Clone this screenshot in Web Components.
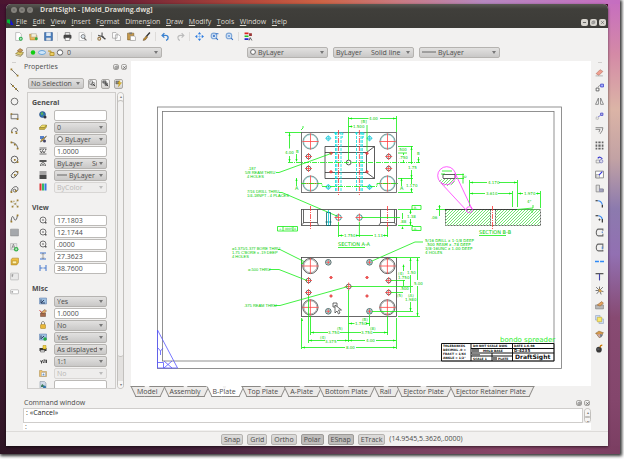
<!DOCTYPE html>
<html lang="en">
<head>
<meta charset="utf-8">
<title>DraftSight</title>
<style>
html, body { margin: 0; height: 100%; }
body { background: #e4e4e4; font: 7px/10px "Open Sans", "Noto Sans", sans-serif; color: #4c4c4c; }
</style>
</head>
<body>
<ds-desktop>
  <ds-window>
    <ds-titlebar slot="title">DraftSight - [Mold_Drawing.dwg]</ds-titlebar>
    <ds-menubar slot="menu" items="_File,_Edit,_View,_Insert,F_ormat,Dimen_sion,_Draw,_Modify,_Tools,_Window,_Help"></ds-menubar>
    <ds-toolbar slot="tools" icons="new,open,save,|,print,preview,|,cut,copy,paste,brush,|,undo,redo,|,pan,zoomin,zoomout,|,props"></ds-toolbar>
    <ds-layerbar slot="tools"></ds-layerbar>
    <ds-palette slot="left" icons="line,ray,circle,rect,arc3,arc,ring,ellipse,earc,points,spline,hatch,textadd,block,note,field"></ds-palette>
    <ds-properties slot="side"></ds-properties>
    <ds-drawing slot="canvas"></ds-drawing>
    <ds-tabs slot="canvas" items="Model,Assembly,B-Plate,Top Plate,A-Plate,Bottom Plate,Rail,Ejector Plate,Ejector Retainer Plate" current="B-Plate"></ds-tabs>
    <ds-command slot="command">: «Cancel»</ds-command>
    <ds-palette slot="right" icons="erase,copyobj,mirror,move,offset,grid,rotate,scale,stretch,fillet,chamfer,slot1,slot2,split,trim,explode,edit,order,render,bomb"></ds-palette>
    <ds-status slot="status">(14.9545,5.3626,.0000)</ds-status>
  </ds-window>
</ds-desktop>

<script>
const ICONS = {
  new: '<path d="M3 1h7l3 3v11H3z" fill="#fff" stroke="#999"/><circle cx="12" cy="12" r="3.5" fill="#2a4"/><path d="M12 10v4M10 12h4" stroke="#fff"/>',
  open: '<path d="M1 4h5l1 2h7v8H2z" fill="#e9b95a" stroke="#a97a2a"/><path d="M4 3h9v6H4z" fill="#f4f0d8" stroke="#aa9"/><circle cx="13" cy="12" r="2.5" fill="#3a4"/>',
  save: '<path d="M1 1h14v14H1z" fill="#4a7dbb" stroke="#2d568c"/><path d="M4 1h8v6H4z" fill="#dfeaf5"/><path d="M4 10h8v5H4z" fill="#ddd"/>',
  print: '<path d="M4 1h8v5H4z" fill="#eee" stroke="#555"/><rect x="1" y="5" width="14" height="7" rx="2" fill="#444"/><path d="M4 10h8v5H4z" fill="#fff" stroke="#555"/>',
  preview: '<path d="M2 1h8l2 3v11H2z" fill="#fff" stroke="#aaa"/><circle cx="9" cy="8" r="3.5" fill="#dde6ee" stroke="#777" stroke-width="1.5"/><path d="M11 11l4 4" stroke="#666" stroke-width="2"/>',
  cut: '<path d="M9 1v8M2 6l10 3" stroke="#555" stroke-width="2"/><circle cx="4" cy="12" r="2.5" fill="none" stroke="#9a7a4a" stroke-width="2"/><path d="M9 8l6 5" stroke="#444" stroke-width="2.5"/>',
  copy: '<path d="M1 1h6l2 2v8H1zM6 5h6l3 3v7H6z" fill="#fff" stroke="#888"/>',
  paste: '<path d="M1 2h11v12H1z" fill="#c79a4a" stroke="#7a5a20"/><path d="M4 1h5v3H4z" fill="#777"/><path d="M6 7h7l2 2v6H6z" fill="#fff" stroke="#888"/>',
  brush: '<path d="M14 1L7 9" stroke="#333" stroke-width="2.5"/><path d="M8 7l2 2-4 5-4 1 1-3z" fill="#c08a2a" stroke="#654"/>',
  undo: '<path d="M6 2L2 6l4 4M2 6h6c6 0 6 7 1 9" fill="none" stroke="#3b82d0" stroke-width="2.4"/>',
  redo: '<path d="M10 2l4 4-4 4M14 6H8c-6 0-6 7-1 9" fill="none" stroke="#bbb" stroke-width="2"/>',
  pan: '<path d="M8 0l3 4H5zM8 16l3-4H5zM0 8l4-3v6zM16 8l-4-3v6z" fill="#2f7de0"/><path d="M8 4v8M4 8h8" stroke="#7ab0f0"/>',
  zoomin: '<circle cx="7" cy="7" r="5" fill="#d7e6f7" stroke="#7ea6d6" stroke-width="2"/><path d="M11 11l3 3M5 7h4M7 5v4M10 3h5" stroke="#2f6fc8" stroke-width="2"/>',
  zoomout: '<circle cx="7" cy="7" r="5" fill="#d7e6f7" stroke="#7ea6d6" stroke-width="2"/><path d="M11 11l3 3M5 7h4" stroke="#2f6fc8" stroke-width="2"/>',
  props: '<path d="M1 1h7v3H1z" fill="#d22"/><path d="M1 6h7v3H1z" fill="#2b2"/><path d="M1 11h7v3H1z" fill="#22c"/><path d="M9 2h5v5H9z" fill="#933"/><path d="M9 15l2-5 3 5" stroke="#444" fill="none" stroke-width="1.5"/>',
  layers: '<path d="M1 10l6-4 8 2-5 5z" fill="#e2cf6a" stroke="#75641c"/><path d="M4 5l5-4 5 3-5 4z" fill="#c99a58" stroke="#7c5a2a"/><path d="M1 13l9 2 5-5" stroke="#75641c" fill="none"/>',
  line: '<path d="M2 2l12 12" stroke="#555" stroke-width="1.4"/><path d="M1 1h3v3H1zM12 12h3v3h-3z" fill="#9a7a2a"/>',
  ray: '<path d="M1 1l14 14" stroke="#444" stroke-width="1.6"/><path d="M4 4h3v3H4zM9 9h3v3H9z" fill="#9a7a2a"/>',
  circle: '<circle cx="8" cy="8" r="6" fill="none" stroke="#666" stroke-width="1.6"/>',
  rect: '<path d="M2 4h12v8H2z" fill="none" stroke="#666" stroke-width="1.6"/><path d="M1 2h3v3H1zM12 11h3v3h-3z" fill="#9a7a2a"/>',
  arc3: '<path d="M3 11C2 2 14 1 13 8c-1 3-3 3-4 1" fill="none" stroke="#555" stroke-width="1.6"/><path d="M2 10h3v3H2zM10 11h3v3h-3z" fill="#9a7a2a"/>',
  arc: '<path d="M2 3c7-1 11 4 12 11" fill="none" stroke="#555" stroke-width="1.6"/><path d="M1 1h3v3H1zM7 5h3v3H7zM12 12h3v3h-3z" fill="#9a7a2a"/>',
  ring: '<circle cx="8" cy="8" r="6" fill="none" stroke="#555" stroke-width="1.6"/><path d="M7 7h3v3H7zM12 11h3v3h-3z" fill="#9a7a2a"/>',
  ellipse: '<ellipse cx="8" cy="8" rx="7" ry="4" transform="rotate(-45 8 8)" fill="none" stroke="#555" stroke-width="1.6"/><path d="M7 7h3v3H7zM12 2h3v3h-3z" fill="#9a7a2a"/>',
  earc: '<path d="M2 12C3 3 13 0 14 6s-6 8-8 5 2-5 5-2" fill="none" stroke="#555" stroke-width="1.6"/><path d="M1 11h3v3H1zM9 9h3v3H9z" fill="#9a7a2a"/>',
  points: '<path d="M1 3h3v3H1zM8 7h3v3H8zM12 1h3v3h-3zM3 12h3v3H3zM12 12h3v3h-3zM6 3h2v2H6z" fill="#9a7a2a"/><path d="M3 5l6 4 4-6M5 13l4-4 4 4" stroke="#bba" fill="none"/>',
  spline: '<path d="M2 13C3 1 6 4 7 8s5 5 6-5" fill="none" stroke="#555" stroke-width="1.6"/><path d="M1 12h3v3H1zM12 1h3v3h-3z" fill="#9a7a2a"/>',
  hatch: '<path d="M1 2h14v12H1z" fill="#a5a8ac" stroke="#888"/>',
  textadd: '<path d="M1 1h11v11H1z" fill="#e8e8e8" stroke="#aaa"/><path d="M3 10l3-8 3 8M4 7h4" stroke="#666" fill="none"/><circle cx="11" cy="11" r="4" fill="#36b04a"/><path d="M11 9v4M9 11h4" stroke="#fff"/>',
  block: '<path d="M4 2h11v8l-3 4H2V5z" fill="#f0c040" stroke="#a57c1a"/><path d="M4 7h8v5H4z" fill="#fff3b0" stroke="#a57c1a"/>',
  note: '<rect x="1" y="2" width="14" height="12" rx="1" fill="#e9e9e9" stroke="#aaa"/><path d="M3 5h3M4 5v4" stroke="#555"/>',
  field: '<rect x="1" y="5" width="14" height="7" rx="1" fill="#fff" stroke="#999"/><path d="M3 7l3 2-3 1z" fill="#555"/>',
  erase: '<path d="M2 10l7-7 5 3-7 7z" fill="#f0a090" stroke="#b06a5a"/><path d="M1 14h13" stroke="#888"/>',
  copyobj: '<path d="M2 9h5v5H2z" fill="#fff" stroke="#555" stroke-width="1.5"/><path d="M10 2h5v5h-5z" fill="#aab8ff" stroke="#44c" stroke-width="1.5"/><path d="M5 7l4-3" stroke="#555"/>',
  mirror: '<path d="M6 2v11H1zM10 2v11h5z" fill="#fff" stroke="#666" stroke-width="1.3"/>',
  move: '<path d="M2 9h4v4H2z" fill="none" stroke="#888" stroke-dasharray="2 1"/><path d="M10 2h4v4h-4z" fill="#ccd" stroke="#44c" stroke-width="1.5"/><path d="M6 9l3-3" stroke="#44c" stroke-width="1.5"/>',
  offset: '<path d="M1 3h13l-1 5-4 6M1 6h8l-2 5" fill="none" stroke="#777" stroke-width="1.5"/>',
  grid: '<path d="M1 1h3v3H1zM6 1h4v3H6zM12 1h3v3h-3zM1 6h3v4H1zM6 6h4v4H6zM12 6h3v4h-3zM1 12h3v3H1zM6 12h4v3H6zM12 12h3v3h-3z" fill="#666"/>',
  rotate: '<path d="M2 9h6v5H2z" fill="#eee" stroke="#777"/><path d="M5 6c2-4 6-2 8 1" fill="none" stroke="#33c" stroke-width="2"/><circle cx="11" cy="11" r="3" fill="#dde" stroke="#55a"/>',
  scale: '<path d="M1 2h14v12H1z" fill="#fff" stroke="#777" stroke-width="1.4"/><path d="M2 8h6v6H2z" fill="#ddd" stroke="#888"/><path d="M7 9l6-6" stroke="#33d" stroke-width="2"/>',
  stretch: '<path d="M2 2v12h13V9H8V2z" fill="#ddd" stroke="#888" stroke-width="1.4"/><path d="M8 9h6v4H8z" fill="#aab" stroke="#77a"/>',
  fillet: '<path d="M1 3h4" stroke="#222" stroke-width="2"/><path d="M5 3c5 0 7 3 8 7" fill="none" stroke="#3a8af0" stroke-width="2"/><path d="M13 10v5" stroke="#222" stroke-width="2"/>',
  chamfer: '<path d="M1 3h5M13 9v6" stroke="#222" stroke-width="2"/><path d="M6 3c4 0 6 3 7 6" fill="none" stroke="#3a8af0" stroke-width="2"/><path d="M8 8v4M6 10h4" stroke="#222"/>',
  slot1: '<path d="M14 10v4H6C1 14 1 2 6 2h8v3" fill="none" stroke="#666" stroke-width="1.8"/><path d="M13 6v3" stroke="#5a8ad0" stroke-width="2"/>',
  slot2: '<path d="M14 12v2H6C1 14 1 2 6 2h8v8" fill="none" stroke="#666" stroke-width="1.8"/><path d="M13 6v5" stroke="#5a8ad0" stroke-width="2"/>',
  split: '<path d="M0 8h7M9 8h7" stroke="#2f8af5" stroke-width="3"/>',
  trim: '<path d="M1 3h14" stroke="#444" stroke-width="2"/><path d="M8 3v12" stroke="#44a" stroke-width="2"/>',
  explode: '<path d="M8 8L2 2M8 8l6-6M8 8l7 2M8 8l3 7M8 8l-5 6M8 8L1 8M8 8V1" stroke="#555" stroke-width="1.4"/><path d="M6 5l5 2 1 4-5-1z" fill="#d8a04a"/>',
  edit: '<path d="M1 7h14v7H1z" fill="#b8b8b8" stroke="#777"/><path d="M4 7l8-6 3 3-6 5z" fill="#e3a35e" stroke="#96602d"/>',
  order: '<path d="M1 1h8v8H1z" fill="#cfe0fa" stroke="#89b"/><path d="M7 7h8v8H7z" fill="#cfe0fa" stroke="#89b"/><path d="M4 4h8v8H4z" fill="#fae96a" stroke="#b8a030"/>',
  render: '<path d="M1 6l6-4 8 3-6 5z" fill="#d79a4a" stroke="#85602a"/><path d="M3 8l5 6 6-7" fill="#caa" stroke="#85602a"/><path d="M9 7l5 2-4 5z" fill="#678"/>',
  bomb: '<circle cx="7" cy="10" r="5" fill="#3a3a3a"/><path d="M9 6c0-3 2-4 4-4" fill="none" stroke="#c70" stroke-width="2"/><path d="M4 9h4" stroke="#999"/>',
  globe: '<circle cx="7" cy="7" r="6" fill="#2e6fb5" stroke="#1d3f6c"/><path d="M3 4l4-2 2 4-4 3zM8 9l4 0-2 3z" fill="#58b058"/><circle cx="12" cy="12" r="3" fill="#334"/>',
  layer: '<path d="M1 9l5-5h9l-4 5z" fill="#f0e070" stroke="#8a7a20"/><path d="M1 9v4h10l4-5V4l-4 5z" fill="#c8b040" stroke="#8a7a20"/>',
  palette: '<path d="M2 2h8v6H2z" fill="#5580c8"/><path d="M15 2L8 11l-5 3 2-5z" fill="#e6b040" stroke="#443"/><circle cx="11" cy="12" r="3" fill="#446"/>',
  lscale: '<path d="M1 2h14M1 5h4m2 0h3m2 0h3M1 14h14" stroke="#444" stroke-width="1.5"/><path d="M2 7l3 5 2-5 3 5 3-5" stroke="#444" fill="none" stroke-width="1.6"/>',
  lstyle: '<path d="M1 2h14v4H1z" fill="#555"/><path d="M3 14c0-9 10-9 10 0M6 14c0-5 4-5 4 0" fill="none" stroke="#444" stroke-width="1.6"/>',
  weight: '<path d="M1 2h14M1 6h14" stroke="#333" stroke-width="1.6"/><path d="M1 10h14M1 14h14" stroke="#111" stroke-width="3"/>',
  colors: '<path d="M1 1h4v14H1z" fill="#d33"/><path d="M6 1h4v14H6z" fill="#3b6"/><path d="M11 1h4v14h-4z" fill="#37d"/>',
  center: '<circle cx="8" cy="8" r="6" fill="none" stroke="#555" stroke-width="1.6"/><circle cx="8" cy="8" r="1.5" fill="#444"/><path d="M12 12h3v3h-3z" fill="#555"/>',
  vsize: '<path d="M2 2h12M2 14h12" stroke="#2a66c8" stroke-width="1.8"/><path d="M8 3v10M6 5l2-2 2 2M6 11l2 2 2-2" stroke="#555" fill="none"/>',
  hsize: '<path d="M2 2v12M14 2v12" stroke="#2a66c8" stroke-width="1.8"/><path d="M3 8h10M5 6L3 8l2 2M11 6l2 2-2 2" stroke="#2a66c8" fill="none"/>',
  ucs: '<path d="M1 2h14v12H1z" fill="#9fc0e0" stroke="#57a"/><path d="M4 12V5m0 7h8M5 11l5-5" stroke="#124" stroke-width="1.6"/>',
  ucsadd: '<path d="M1 2h14v12H1z" fill="#9fc0e0" stroke="#57a"/><path d="M4 12V5M5 11l5-5" stroke="#124" stroke-width="1.6"/><circle cx="12" cy="12" r="3.5" fill="#2a4"/>',
  anno: '<path d="M3 8h10v7H3z" fill="#a66a4a" stroke="#643"/><path d="M4 7l8-6 3 3-5 5z" fill="#e8b06a" stroke="#643"/><path d="M1 3l4 3" stroke="#c33" stroke-width="2"/>',
  lock: '<path d="M5 7V4c0-4 6-4 6 0v3" fill="none" stroke="#888" stroke-width="2"/><rect x="3" y="7" width="10" height="8" rx="1" fill="#e8b83a" stroke="#a17a1a"/>',
  printer: '<path d="M1 6h14v6H1z" fill="#333"/><path d="M8 1h6v7H8z" fill="#f2d34a" stroke="#a80"/><path d="M3 10h8v4H3z" fill="#ddd" stroke="#444"/>',
  ratio: '<path d="M2 8h3v5M7 6l2 6M9 6h3v6M13 6h2v6" stroke="#444" fill="none" stroke-width="2"/>',
  folder: '<path d="M1 3h5l1 2h8v10H1z" fill="#eec26a" stroke="#a98a4a"/><path d="M5 7h8v7H5z" fill="#fff" stroke="#99a"/><circle cx="9" cy="11" r="2" fill="#69c"/>',
  sheet: '<path d="M2 1h9l3 3v11H2z" fill="#cfd8e6" stroke="#789"/><path d="M4 9l3-3 5 6H4z" fill="#3a7a5a"/><circle cx="11" cy="12" r="3" fill="#37a"/>',
  pick1: '<path d="M2 2h6v8H2zM6 6h6v6H6z" fill="#fff" stroke="#555" stroke-width="1.4"/><path d="M9 9l5 5" stroke="#333" stroke-width="2"/>',
  pick2: '<path d="M2 2h7v5H2zM7 7h5v5H7z" fill="#999" stroke="#444" stroke-width="1.6"/><path d="M10 10l4 4" stroke="#333" stroke-width="2"/>',
  pick3: '<path d="M2 2h7v7H2z" fill="#888" stroke="#444"/><path d="M11 1L6 8h4l-2 7 7-9h-4z" fill="#f3c22a" stroke="#a80"/>',
  float: '<path d="M3 6h6v6H3zM6 6V3h6v7H9" fill="none" stroke="#666" stroke-width="1.6"/>',
  close: '<path d="M4 4l8 8M12 4l-8 8" stroke="#666" stroke-width="2.4"/>',
  min: '<path d="M3 8h10" stroke="#444" stroke-width="2.4"/>'
};

const svg = (name, size = 9) =>
  `<svg width="${size}" height="${size}" viewBox="0 0 16 16" aria-hidden="true">${ICONS[name] || ''}</svg>`;

function define(name, css, html) {
  customElements.define(name, class extends HTMLElement {
    connectedCallback() {
      if (this.shadowRoot) return;
      const t = document.createElement('template');
      t.innerHTML = `<style>*{box-sizing:border-box}svg{display:block;flex:none}button,input,select{font:inherit;color:inherit;margin:0}${css}</style>` +
        (typeof html === 'function' ? html(this) : html);
      this.attachShadow({ mode: 'open' }).append(t.content.cloneNode(true));
    }
  });
}

define('ds-icon', ':host{display:block}', el => svg(el.getAttribute('name'), el.getAttribute('size') || 9));

define('ds-tool', `
  :host{display:block}
  button{display:grid;place-items:center;width:100%;height:100%;padding:0;border:0;background:none}
  :host([framed]) button{border:1px solid #a9a7a4;border-radius:2px;background:linear-gradient(#fafafa,#d3d1ce)}`,
  el => `<button type="button" aria-label="${el.getAttribute('icon')}">${svg(el.getAttribute('icon'), el.getAttribute('size') || 9)}</button>`);

define('ds-desktop', `
  :host{display:block;height:100vh;box-sizing:border-box;padding:0 4px 5px 0;background:#fff}
  div{height:100%;box-sizing:border-box;padding:4px 12px 8px 6px;box-shadow:1px 1px 3px 1px #333;
    background:
    linear-gradient(90deg,#4a1530 0,#6d2236 20%,#b84c3c 42%,#cd6446 52%,#c97a80 64%,#b688c0 78%,#c66dc0 100%) 0 0/100% 4px no-repeat,
    linear-gradient(90deg,#2e1524 0,#43203a 30%,#74405e 62%,#8a4668 82%,#7b3e62 100%) 0 100%/100% 8px no-repeat,
    linear-gradient(#c66dc0 0,#d48aa6 12%,#dbb4a6 24%,#c2a2a4 35%,#8c7aae 46%,#9270b2 56%,#874a72 70%,#84466c 88%,#7b3e62 100%) 100% 0/12px 100% no-repeat,
    linear-gradient(#461331,#54203e 50%,#2e1524);}`,
  '<div><slot></slot></div>');

define('ds-window', `
  :host{display:flex;flex-direction:column;height:100%;background:#f2f1f0;border-radius:5px 5px 0 0;overflow:hidden;box-shadow:0 1px 3px #0009}
  .head{background:linear-gradient(#5a5954 0,#403f3b 5px,#3c3b37)}
  .body{flex:1;display:flex;min-height:0}
  .mid{flex:1;display:flex;flex-direction:column;min-width:0}
  .work{flex:1;display:flex;gap:3px;min-height:0}
  .view{flex:1;display:flex;flex-direction:column;min-width:0}
  .tools{padding-bottom:1px}`,
  `<header class="head"><slot name="title"></slot><slot name="menu"></slot></header>
   <div class="tools"><slot name="tools"></slot></div>
   <div class="body"><slot name="left"></slot>
     <div class="mid"><div class="work"><slot name="side"></slot><main class="view"><slot name="canvas"></slot></main></div>
     <slot name="command"></slot></div>
   <slot name="right"></slot></div><slot name="status"></slot>`);

define('ds-titlebar', `
  :host{display:flex;align-items:center;gap:2px;height:12px;padding:0 5px;color:#dfdbd2;font-weight:bold}
  button{display:grid;place-items:center;width:6px;height:6px;padding:0;border:0;border-radius:3px;background:#85837d}
  button:first-child{background:#f0572a}
  span{margin-left:5px}`,
  `<button aria-label="Close">${svg('close', 4)}</button><button aria-label="Minimize">${svg('min', 4)}</button><button aria-label="Maximize">${svg('float', 4)}</button><span><slot></slot></span>`);

define('ds-menubar', `
  :host{display:flex;align-items:center;height:12px;color:#dfdbd2;padding:0 2px 0 1px}
  nav{display:flex;justify-content:space-between;margin-left:2px;width:271px}
  button{border:0;background:none;padding:0;line-height:10px}
  .win{display:flex;gap:2px;margin-left:auto}
  .win button{display:grid;place-items:center;width:7px;height:7px;border-radius:2px;background:#d8d5cf}`,
  el => `<svg width="7" height="8" viewBox="0 0 14 16" aria-hidden="true"><path d="M0 3h6v9l-6-3z" fill="#0b3"/><path d="M7 2l6 12H7z" fill="#11d"/></svg>
  <nav>${el.getAttribute('items').split(',').map(i => `<button type="button">${i.replace(/_(.)/, '<u>$1</u>')}</button>`).join('')}</nav>
  <div class="win"><button aria-label="Minimize">${svg('min', 5)}</button><button aria-label="Restore">${svg('float', 5)}</button><button aria-label="Close">${svg('close', 5)}</button></div>`);

define('ds-toolbar', `
  :host{display:flex;align-items:center;height:16px;padding-left:5px}
  ds-tool{width:15px;height:13px}
  i{width:1px;height:9px;background:#dedcda;margin:0 2px 0 1px}`,
  el => el.getAttribute('icons').split(',').map(n => n === '|' ? '<i></i>' : `<ds-tool icon="${n}"></ds-tool>`).join(''));

define('ds-select', `
  :host{display:block;height:11px;min-width:0;color:#4c4c4c}
  label{display:flex;align-items:center;gap:2px;height:100%;padding:0 3px 0 2px;border:1px solid #b5b3b0;border-radius:2px;background:linear-gradient(#e2e1e0,#c9c8c7)}
  select{appearance:none;flex:1;width:0;min-width:0;padding:0;border:0;background:none;line-height:9px;height:9px;opacity:1;text-overflow:clip}
  :host([disabled]){color:#b9b7b5}
  :host([disabled]) label{background:#eeedec;border-color:#d8d6d4}`,
  el => `<label><slot></slot><select aria-label="${el.getAttribute('label')}" ${el.hasAttribute('disabled') ? 'disabled' : ''}><option>${el.getAttribute('value').replace(/ {2,}/g, s => '&nbsp;'.repeat(s.length))}</option></select>
  <svg width="4" height="3" viewBox="0 0 4 3" aria-hidden="true"><path d="M0 0h4L2 3z" fill="${el.hasAttribute('disabled') ? '#bbb' : '#777'}"/></svg></label>`);

define('ds-layerbar', `
  :host{display:flex;align-items:center;height:16px;gap:5px;padding-left:9px}
  .a{width:136px}.b{width:81px}
  .m{display:flex;align-items:center;gap:2px;margin-right:80px}`,
  `<div class="m"><ds-icon name="layers"></ds-icon>
   <ds-select class="a" label="Layer" value="0"><svg width="36" height="7" viewBox="0 0 36 7" aria-hidden="true"><circle cx="4" cy="3.500" r="2.200" fill="#1c1"/><ellipse cx="13" cy="3.500" rx="3.500" ry="2" fill="#cfe6fa" stroke="#6aa5d8"/><path d="M19 2h3v2M21 3.500h4v3h-4z" stroke="#b8963a" fill="#ecd060"/><circle cx="31" cy="3.500" r="2.700" fill="#fff" stroke="#666"/></svg></ds-select></div>
   <ds-select class="b" label="Color" value="ByLayer"><svg width="6" height="6" viewBox="0 0 6 6" aria-hidden="true"><circle cx="3" cy="3" r="2.400" fill="#fff" stroke="#666"/></svg></ds-select>
   <ds-select class="b" label="Line style" value="ByLayer     Solid line"></ds-select>
   <ds-select class="b" label="Line weight" value="ByLayer"><svg width="14" height="2" aria-hidden="true"><path d="M0 1h14" stroke="#666"/></svg></ds-select>`);

define('ds-palette', `
  :host{display:block;flex:none}
  :host([slot=left]){width:16px}
  :host([slot=right]){width:17px}
  div{display:flex;flex-direction:column;justify-content:space-between;padding-top:4px}
  div::before{content:"";width:4px;height:1px;margin:-3px auto 1px;background:#d2d0ce}
  ds-tool{height:12px}`,
  el => { const n = el.getAttribute('icons').split(','); return `<div style="height:${Math.round(n.length * 14.56 + 3)}px">${n.map(i => `<ds-tool icon="${i}"></ds-tool>`).join('')}</div>`; });

define('ds-header', `
  :host{display:flex;align-items:center;height:11px;padding:0 1px 0 2px;gap:2px}
  span{flex:1}
  ds-tool{width:6px;height:6px}`,
  '<span><slot></slot></span><ds-tool icon="float" size="5" framed></ds-tool><ds-tool icon="close" size="5" framed></ds-tool>');

define('ds-row', `
  :host{display:grid;grid-template-columns:22px minmax(0,1fr);align-items:center;height:12px}
  ds-icon{justify-self:center}
  input{width:100%;height:11px;padding:0 2px;border:1px solid #bcbab7;border-radius:2px;background:#fff;line-height:9px;display:block}`,
  el => {
    const a = n => el.getAttribute(n), glyph = a('mark') === 'o' ? '<svg width="6" height="6" viewBox="0 0 6 6" aria-hidden="true"><circle cx="3" cy="3" r="2.400" fill="#fff" stroke="#666"/></svg>'
      : a('mark') === '-' ? '<svg width="10" height="2" aria-hidden="true"><path d="M0 1h10" stroke="#666"/></svg>' : '';
    return `<ds-icon name="${a('icon')}" size="8"></ds-icon>` + (a('select') !== null
      ? `<ds-select label="${a('icon')}" value="${a('select')}" ${el.hasAttribute('disabled') ? 'disabled' : ''}>${glyph}</ds-select>`
      : `<input type="text" aria-label="${a('icon')}" value="${a('value')}">`);
  });

define('ds-group', ':host{display:block;margin-bottom:8px}h2{margin:0;font:inherit;font-weight:bold;line-height:13px;height:13px}div{padding-right:8px}',
  el => `<h2>${el.getAttribute('name')}</h2><div><slot></slot></div>`);

define('ds-scrollbar', `
  :host{display:flex;flex-direction:column;width:7px;border:1px solid #c2c0bd;border-radius:4px;background:#e3e1df;overflow:hidden}
  button{height:7px;flex:none;padding:0;border:0;background:#f6f5f4;font-size:4px;line-height:5px;color:#777}
  i{flex:var(--thumb,1);background:#f2f1f0;border:solid #c2c0bd;border-width:1px 0;border-radius:3px}
  b{flex:var(--rest,0)}`,
  '<button aria-label="Up">▴</button><i></i><b></b><button aria-label="Down">▾</button>');

define('ds-properties', `
  :host{display:flex;flex-direction:column;width:106px;flex:none;box-sizing:border-box;padding-bottom:7px}
  .pick{display:flex;align-items:center;gap:4px;padding:6px 5px 3px 6px}
  .pick ds-select{flex:1}
  .pick ds-tool{width:9px;height:10px}
  .list{flex:1;display:flex;gap:1px;min-height:0;padding:0 4px 0 5px}
  .frame{flex:1;border:1px solid #cfcdcb;overflow:hidden;padding:3px 0 0 4px;min-width:0}
  ds-scrollbar{--thumb:130;--rest:12}`,
  `<ds-header>Properties</ds-header>
  <div class="pick"><ds-select label="Selection" value="No Selection"></ds-select><ds-tool icon="pick1" size="7" framed></ds-tool><ds-tool icon="pick2" size="7" framed></ds-tool><ds-tool icon="pick3" size="7" framed></ds-tool></div>
  <div class="list"><div class="frame">
   <ds-group name="General">
    <ds-row icon="globe" value=""></ds-row><ds-row icon="layer" select="0"></ds-row><ds-row icon="palette" select="ByLayer" mark="o"></ds-row>
    <ds-row icon="lscale" value="1.0000"></ds-row><ds-row icon="lstyle" select="ByLayer     Solid line"></ds-row><ds-row icon="weight" select="ByLayer" mark="-"></ds-row><ds-row icon="colors" select="ByColor" disabled></ds-row>
   </ds-group>
   <ds-group name="View">
    <ds-row icon="center" value="17.1803"></ds-row><ds-row icon="center" value="12.1744"></ds-row><ds-row icon="center" value=".0000"></ds-row><ds-row icon="vsize" value="27.3623"></ds-row><ds-row icon="hsize" value="38.7600"></ds-row>
   </ds-group>
   <ds-group name="Misc">
    <ds-row icon="ucs" select="Yes"></ds-row><ds-row icon="anno" value="1.0000"></ds-row><ds-row icon="lock" select="No"></ds-row><ds-row icon="ucsadd" select="Yes"></ds-row><ds-row icon="printer" select="As displayed"></ds-row><ds-row icon="ratio" select="1:1"></ds-row><ds-row icon="folder" select="No" disabled></ds-row><ds-row icon="sheet" value=""></ds-row>
   </ds-group></div>
  <ds-scrollbar></ds-scrollbar></div>`);

define('ds-tabs', `
  :host{display:flex;height:10px;flex:none;color:#4c4c4c}
  button{position:relative;border:0;background:none;padding:0 6px;line-height:9px;z-index:0;white-space:nowrap}
  button::before,button::after{content:"";position:absolute;z-index:-1;top:0;height:9px;border:1px solid #8b8986;background:#eceae8}
  button::before{left:2px;right:50%;border-right:0;transform:skewX(25deg)}
  button::after{left:50%;right:0;border-left:0;transform:skewX(-25deg)}
  button[aria-selected=true]::before,button[aria-selected=true]::after{background:#fff;border-top-color:#fff}`,
  el => el.getAttribute('items').split(',').map(t => `<button type="button" role="tab" aria-selected="${t === el.getAttribute('current')}">${t}</button>`).join(''));

define('ds-command', `
  :host{display:block;flex:none;padding-top:1px}
  .log{display:flex;gap:1px;height:15px}
  .log p{flex:1;margin:0 0 0 1px;padding:0 2px;background:#fff;border:1px solid #cfcdcb;line-height:7px;color:#222}
  .in{display:flex;background:#fff;margin:0 0 1px 1px;padding:0 2px;line-height:7px;height:7px}
  input{flex:1;border:0;padding:0;height:7px;line-height:7px;min-width:0;background:none}`,
  '<ds-header>Command window</ds-header><div class="log"><p><slot></slot></p><ds-scrollbar></ds-scrollbar></div><label class="in">:<input type="text" aria-label="Command"></label>');

define('ds-status', `
  :host{display:flex;align-items:center;gap:4px;height:15px;flex:none;box-sizing:border-box;padding-left:215px;border-top:1px solid #dddbd9}
  button{height:11px;padding:0 2px;border:1px solid #b5b3b0;border-radius:2px;background:linear-gradient(#dddcdb,#cfcdcb);line-height:9px}
  button[aria-pressed=true]{background:#bfbdbb;border-color:#9d9b98}`,
  ['Snap', 'Grid', 'Ortho', 'Polar', 'ESnap', 'ETrack'].map(t => `<button type="button" aria-pressed="${t === 'Polar' || t === 'ESnap'}">${t}</button>`).join('') + '<span><slot></slot></span>');

/* Drawing sheet: user units are screen units of the default window. */
const circ = (x, y, r, c) => `<circle cx="${x}" cy="${y}" r="${r}" stroke="${c}"/>`;
const cross = (x, y, s) => `<path d="M${x - s} ${y}h${2 * s}M${x} ${y - s}v${2 * s}" stroke="#f44"/>`;
const dot = (x, y) => circ(x, y, 1, '#a22') + cross(x, y, 1.5);
const path = (d, c = '#1e1') => `<path d="${d}" stroke="${c}"/>`;
const text = (x, y, s, c = '#0c0', size = 4) => `<text x="${x}" y="${y}" font-size="${size}" fill="${c}">${s}</text>`;
const note = (x, y, s) => `<text class="note" x="${x}" y="${y}" font-size="4" fill="#0c0">${s}</text>`;
const bold = (x, y, s, size = 3) => `<text x="${x}" y="${y}" font-size="${size}" font-weight="bold" fill="#111">${s}</text>`;
const four = (xs, ys, f) => xs.map(x => ys.map(y => f(x, y)).join('')).join('');
const arrows = pts => pts.map(([x, y, d]) => `<path d="M${x} ${y}${{ l: 'l3-1v2', r: 'l-3-1v2', u: 'l-1 3h2', d: 'l-1-3h2' }[d]}z" fill="#1e1" stroke="none"/>`).join('');

function sheet() {
  let s = '';
  s += '<rect x="157.500" y="107" width="404" height="261.500" stroke="#777"/><rect x="162.500" y="111.500" width="391.500" height="249.500" stroke="#777"/>';
  /* core plate, top view */
  s += '<rect x="301.500" y="132.500" width="95" height="60" stroke="#555"/><path d="M325 146.500h49.500v32H325zM325 152.500h42M325 172.500h42M366.500 152.500v20M366.500 152.500l8-6M366.500 172.500l8 6" stroke="#333"/>';
  s += four([310.5, 387.5], [141.5, 183.5], (x, y) => circ(x, y, 7.5, '#555') + circ(x, y, 6.9, '#7cc') + cross(x, y, 8));
  s += four([308.5, 388.7], [156.5, 168.5], (x, y) => circ(x, y, 2.3, '#444') + cross(x, y, 3.5));
  s += four([328.3, 369.5], [138.3, 187], (x, y) => circ(x, y, 2, '#0cd') + path(`M${x - 3} ${y}h6M${x} ${y - 3}v6`, '#3cd'));
  s += '<path d="M335.500 132v60M336.800 132v60M341 132v60M356.500 132v60M361 132v60M362.300 132v60M334 133h9l-1 5M355 133h9l-1 5" stroke="#0dd" stroke-dasharray="3 1"/>';
  s += '<path d="M338.500 130v65M359.400 130v65" stroke="#f33" stroke-dasharray="5 1 1 1"/>';
  s += four([331, 367], [153.3, 171.8], dot) + circ(348.7, 162.5, 2.4, '#333');
  s += '<path d="M288 162.500h132M301 183.500h21v3h55v-3h22" stroke="#1e1" stroke-dasharray="5 1 1 1"/>';
  s += path('M348.500 117v43M396.500 116v16M348.500 118.500h20M380 118.500h16.500M348.500 126.500h4M367 125v26M285 132.500h16M289.500 132.500v16M289.500 156v6M398 146.500h15M398 153h9M398 178.500h15M398 192.500h15M411.500 146v18M411.500 170v14M411.500 188v4M403.500 153v2M403.500 160v3M296.500 154v7M418.500 157v6M296.500 178v8M401.500 178v8M301 130l2-2v-2');
  s += arrows([[349, 118.5, 'l'], [396, 118.5, 'r'], [289.5, 133, 'u'], [289.5, 162, 'd'], [296.5, 162, 'd'], [418.5, 162, 'd'], [411.5, 147, 'u'], [411.5, 178, 'd'], [411.5, 192, 'd'], [296.5, 178, 'u'], [401.5, 178, 'u'], [349, 126.5, 'l']]);
  s += text(369, 120, '4.00') + text(353, 128, '1.500') + text(361, 123, '[B]') + text(285, 154, '4.00') + text(296, 153, 'B') + text(417, 155, 'B') + text(398, 151, '.500') + text(399, 159, '.750') + text(408, 169, '1.75') + text(406, 187, '1.170') + text(295, 190, 'A', '#0c0', 5) + text(400, 190, 'A', '#0c0', 5);
  s += note(248, 170, '.187') + note(245, 174, '5/8 REAM THRU') + note(247, 178, '4 HOLES') + path('M276 172.500h3l52-19');
  s += note(247, 193, '7/16 DRILL THRU') + note(247, 197, '1/4-18NPT - 4 PLACES') + path('M279 192.500h3l56 24');
  /* section A-A */
  s += '<rect x="301.500" y="209.500" width="95" height="16" stroke="#444"/><path d="M303.500 209.500v13.500l-2 2M317.500 209.500v13.500l1 2.500M303.500 222.500h14M380.500 209.500v13.500l-1.500 2M394.500 209.500v13.500l2 2M380.500 222.500h14" stroke="#444"/>';
  s += '<path d="M326.500 212.500h4v13h-4zM325.500 222h6" stroke="#066"/>' + path('M328.500 210v15', '#0cd');
  s += [338.5, 359.4].map(x => circ(x, 217.5, 2.8, '#177') + cross(x, 217.5, 4)).join('');
  s += '<path d="M310.500 206v23M387.500 206v23" stroke="#f33" stroke-dasharray="5 1 1 1"/>';
  s += path('M338.500 222v15M359.400 222v15M387.500 227v10M338.500 235.500h5M356 235.500h17M383 235.500h5M362 217.500h38M398 209.500h15M398 225.500h15M410.500 210v4M410.500 219v6M402.500 213v6M412 205.500h9v4h-9zM412 226.500h9v4h-9zM277.500 226.500h20v4.500h-20zM283 226.500v4.500M293 226.500v4.500');
  s += arrows([[339, 235.5, 'l'], [359, 235.5, 'r'], [387, 235.5, 'r'], [410.5, 210, 'u'], [410.5, 225, 'd'], [402.5, 226, 'u']]);
  s += text(344, 237, '1.750') + text(374, 237, '1.13') + text(407, 218, '1.38') + text(400, 223, '.88') + text(413, 209, '-B-', '#0c0', 3) + text(413, 230, '-A-', '#0c0', 3) + text(279, 230, '⊥', '#0c0', 3) + text(284, 230, '.0005', '#0c0', 3) + text(294, 230, 'A', '#0c0', 3);
  s += text(338, 246, 'SECTION A-A', '#0c0', 5) + path('M338 247.500h27');
  /* B plate, bottom view */
  s += '<rect x="301.500" y="257.500" width="95" height="59" stroke="#444"/>';
  s += four([310.4, 387.4], [266, 307.4], (x, y) => circ(x, y, 7.6, '#333') + circ(x, y, 6.6, '#999') + cross(x, y, 8));
  s += four([308.5, 388.7], [280.5, 292.5], (x, y) => circ(x, y, 2.3, '#444') + cross(x, y, 3.5));
  s += four([328.3, 369.5], [262.3, 311.3], (x, y) => circ(x, y, 2.8, '#244') + circ(x, y, 1.6, '#3bb') + cross(x, y, 2));
  s += four([331, 367], [277.5, 296], dot) + circ(348.7, 286.5, 2.4, '#444') + cross(348.7, 286.5, 4);
  s += path('M278 249.500h2l24 12M269 269.500h10l28 11M274 305.500h6l68-19M372 261l43-19h8M391 280.500h14M351 286.500h62M391 292.500h12M372 311.500h41M390 257.500h30M398 316.500h22M403.500 266v5M403.500 280v6M410.500 258v12M410.500 275v11M410.500 287v6M410.500 302v9M417.500 258v22M417.500 286v30M310.500 316v19M308.500 296v47M301.500 318v31M348.500 290v52M369.500 315v11M387.500 316v19M396.500 318v31M348.500 323.500h6M366 323.500h4M311 332.500h17M340 332.500h21M373 332.500h15M309 340.500h16M337 340.500h28M376 340.500h20M302 347.500h43M356 347.500h40');
  s += arrows([[302, 347.5, 'l'], [396, 347.5, 'r'], [309, 340.5, 'l'], [348, 340.5, 'r'], [349, 340.5, 'l'], [396, 340.5, 'r'], [311, 332.5, 'l'], [387, 332.5, 'r'], [349, 323.5, 'l'], [369, 323.5, 'r'], [417.5, 258, 'u'], [417.5, 316, 'd'], [410.5, 258, 'u'], [410.5, 311, 'd'], [403.5, 264, 'u'], [302, 261, 'u'], [302, 318, 'u']]);
  s += note(232, 250, 'ø1.375/1.377 BORE THRU') + note(232, 254, '1.75 C&#39;BORE x .19 DEEP') + note(232, 258, '4 HOLES') + note(248, 271, 'ø.500 THRU') + note(244, 307, '.375 REAM THRU');
  s += text(425, 242, '5/16 DRILL x 1-1/8 DEEP') + text(426, 246, '.500 REAM x .78 DEEP') + text(425, 250, '3/8-16UNC x 1.00 DEEP') + text(425, 254, '4 HOLES');
  s += text(398, 275, '(4)') + text(398, 279, '1.750') + text(407, 274, '1.50') + text(414, 285, '5.00') + text(400, 290, '.500') + text(397, 297, '(5)') + text(408, 297, '(A)') + text(405, 301, '1.980') + text(362, 321, '(B)') + text(355, 325, '1.750') + text(337, 330, '(5)') + text(328, 334, '3.750') + text(370, 330, '(8)') + text(361, 334, '3.750') + text(320, 339, '(4)') + text(325, 343, '3.375') + text(366, 342, '4.00') + text(346, 349, '8.00');
  s += '<path d="M333 303h4v4h-4z" stroke="#444"/><path d="M335 305v8l2-2 1.500 3 1.500-1-1.500-3h3z" fill="#fff" stroke="#333" stroke-width=".7"/>';
  /* section B-B */
  s += '<rect x="445.500" y="209.500" width="95" height="16" fill="url(#hatch)" stroke="none"/><rect x="490.500" y="210" width="5" height="15" fill="#fff" stroke="none"/><path d="M445.500 209.500v16h95v-16M490.500 209.500v16M495.500 209.500v16" stroke="#444" stroke-dasharray="2 1"/><path d="M445 209.500h72" stroke="#111"/><path d="M517 209.500h23" stroke="#484"/><path d="M492.500 206v23" stroke="#f33" stroke-dasharray="5 1 1 1"/>';
  s += path('M469.500 180v26M517.500 180v27M512.500 191v16M540.500 191v17M470 182.500h17M499 182.500h18M470 193.500h15M498 193.500h14M518 193.500h5M536 193.500h4M436 209.500h9M439.500 205v4M439.500 210v6M517 209.500l16-1.500v-3M532 209v4M463 173.500v10M456 174.500h8M456 178.500h8');
  s += arrows([[470, 182.5, 'l'], [517, 182.5, 'r'], [470, 193.5, 'l'], [512, 193.5, 'r'], [518, 193.5, 'l'], [540, 193.5, 'r'], [439.5, 209, 'd']]);
  s += text(488, 184, '4.170') + text(486, 195, '3.610') + text(524, 195, '1.970') + text(431, 219, '.06') + text(527, 203, '4°') + text(462, 178, '.02', '#0c0', 3);
  s += '<path d="M439 181a9 9 0 0 0 16 0v-2h-13z" fill="url(#hatch)" stroke="none"/><path d="M443 174.500h12M443 178.500h12v-4M443 174v4" stroke="#333"/>' + path('M442 171h10M441 174h4');
  s += circ(446.7, 175.7, 9, '#f3f') + circ(469.3, 209.7, 3, '#f3f') + path('M441 183l26 28M455 173l17 36', '#f3f');
  s += text(479, 234, 'SECTION B-B', '#0c0', 5) + path('M479 235.500h27');
  /* title block */
  s += text(500, 342, 'bondo spreader', '#3e3', 7);
  s += '<path d="M441.500 343.500h112.500v17.500H441.500zM471 343.500v17.500M512.500 343.500v17.500M471 348.500h83M471 353h83M471 356h41M492 353v8" stroke="#111" stroke-width="1"/><path d="M472 349h7v3h-7zM492 357h5v3h-5zM472 354h8v2h-8z" fill="#777" stroke="none"/>';
  s += bold(443, 347, 'TOLERANCES') + bold(443, 351, 'DECIMAL .0 ±') + bold(443, 355, 'FRACT ± 1/64') + bold(443, 359, 'ANGLE ± 1/2°')
    + bold(473, 347, 'DO NOT SCALE DWG') + bold(483, 352, 'MOLD BASE') + bold(473, 360, 'SCALE 1') + bold(498, 360, 'PLATE')
    + bold(514, 347, 'DATE 1-6-98') + bold(514, 352, 'D-4235', 4) + bold(515, 359, 'DraftSight', 6);
  /* UCS marker */
  s += '<path d="M157.500 330v38h20zM157.500 362.500h6v5.500M158 348l2.500 3 2.500-3M160.500 351v4M164 361l8 7M172 361l-8 7" stroke="#55f"/>';
  return s;
}
define('ds-drawing', ':host{display:block;flex:1;min-height:0;background:#fff}svg{width:100%;height:100%}text{font-family:"DejaVu Sans",sans-serif;stroke:none}.note{font-family:"Liberation Sans",sans-serif}.ink{stroke-width:.8}',
  () => `<svg viewBox="131 61 460 325" fill="none" role="img" aria-label="Mold drawing"><defs><pattern id="hatch" width="3" height="3" patternUnits="userSpaceOnUse"><path d="M-1 1l2-2M0 3l3-3M2 4l2-2" stroke="#3d3" stroke-width=".7"/></pattern></defs><g class="ink">${sheet()}</g></svg>`);
</script>
</body>
</html>
